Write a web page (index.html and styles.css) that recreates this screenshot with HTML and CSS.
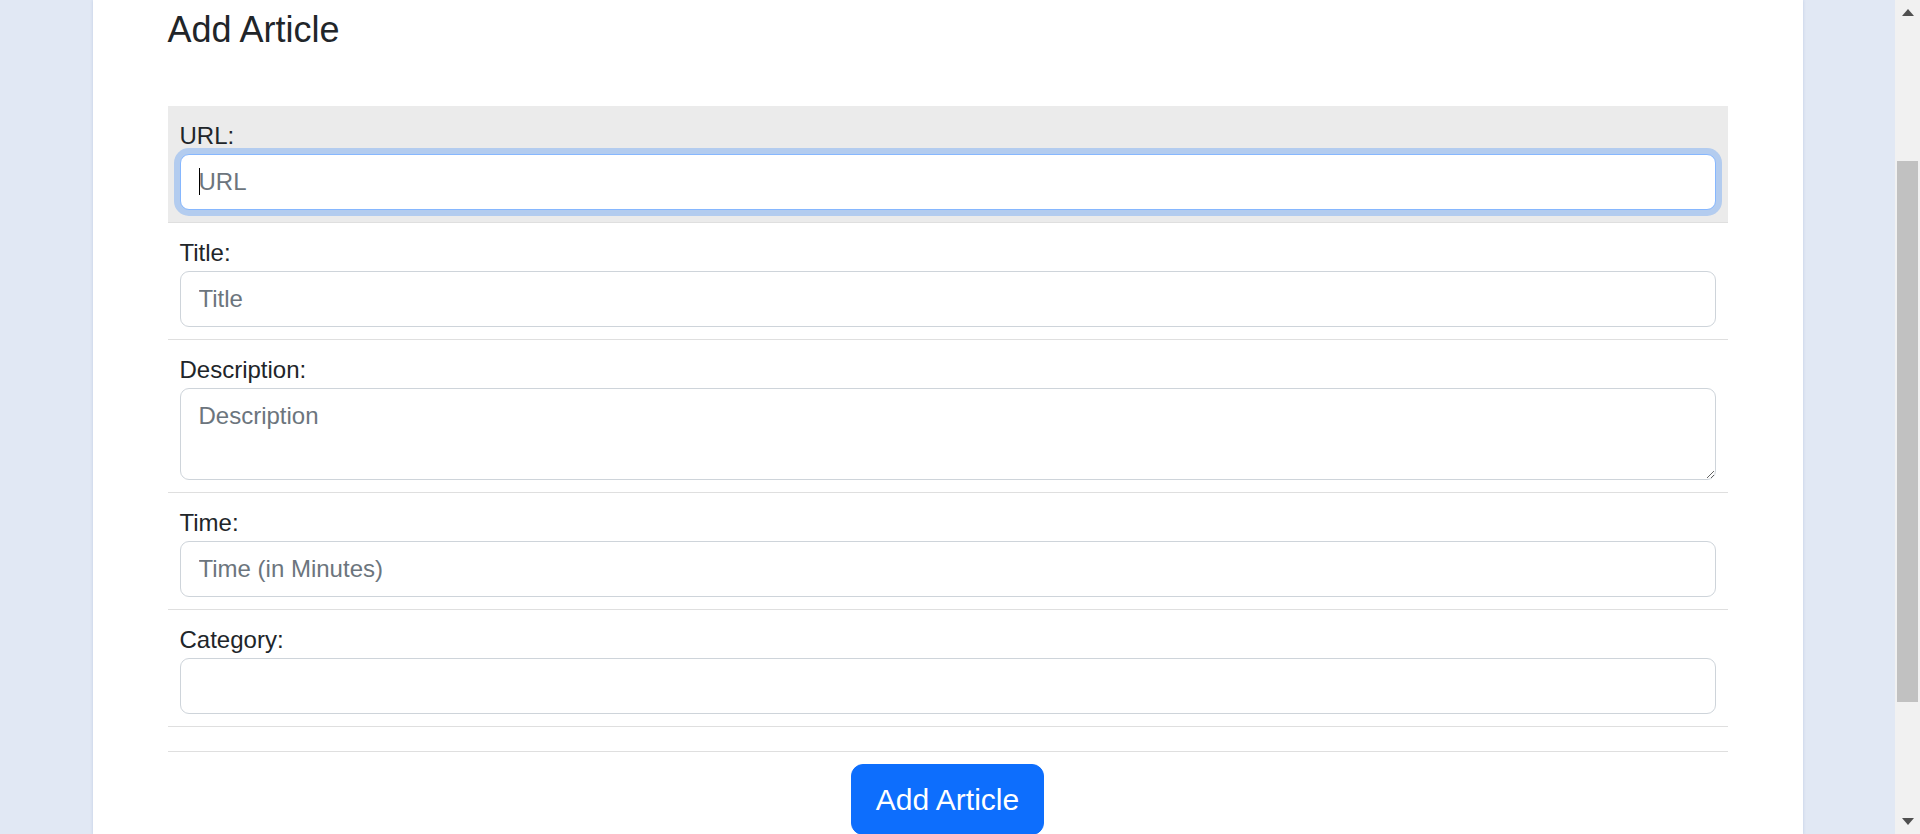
FILE: index.html
```html
<!DOCTYPE html>
<html lang="en">
<head>
<meta charset="utf-8">
<title>Add Article</title>
<link rel="stylesheet" href="styles.css">
</head>
<body>
<div class="viewport">
  <div class="page">
    <main class="card">
      <div class="container">
        <h4 class="heading">Add Article</h4>
        <form class="article-form">
          <ul class="list-group">
            <li class="list-item active-row">
              <label class="form-label" for="url">URL:</label>
              <div class="caret-wrap">
                <input class="form-control focused" id="url" type="text" placeholder="URL">
              </div>
            </li>
            <li class="list-item">
              <label class="form-label" for="title">Title:</label>
              <input class="form-control" id="title" type="text" placeholder="Title">
            </li>
            <li class="list-item">
              <label class="form-label" for="desc">Description:</label>
              <textarea class="form-control textarea" id="desc" rows="2" placeholder="Description"></textarea>
            </li>
            <li class="list-item">
              <label class="form-label" for="time">Time:</label>
              <input class="form-control" id="time" type="text" placeholder="Time (in Minutes)">
            </li>
            <li class="list-item">
              <label class="form-label" for="category">Category:</label>
              <input class="form-control" id="category" type="text">
            </li>
            <li class="list-item empty"></li>
          </ul>
          <div class="actions">
            <button class="btn" type="button">Add Article</button>
          </div>
        </form>
      </div>
    </main>
  </div>
  <div class="scrollbar" aria-hidden="true">
    <div class="sb-button">
      <svg width="12" height="7" viewBox="0 0 12 7"><polygon points="6,0 12,7 0,7" fill="#505050"/></svg>
    </div>
    <div class="sb-track">
      <div class="sb-thumb"></div>
    </div>
    <div class="sb-button">
      <svg width="12" height="7" viewBox="0 0 12 7"><polygon points="0,0 12,0 6,7" fill="#505050"/></svg>
    </div>
  </div>
</div>
</body>
</html>
```

FILE: styles.css
```css
body {
  margin: 0;
  background: #e1e8f4;
  font-family: "Liberation Sans", Arial, sans-serif;
  color: #212529;
}

.viewport {
  display: flex;
  height: 834px;
  overflow: hidden;
}

.page {
  flex: 1;
  min-width: 0;
}

.card {
  width: 1710px;
  min-height: 100%;
  margin: 0 auto;
  background: #ffffff;
  box-shadow: 0 0 3px rgba(40, 80, 160, 0.18);
  box-sizing: border-box;
  padding-top: 8px;
}

.container {
  padding: 0 75px;
}

.heading {
  margin: 0 0 55px;
  font-size: 36px;
  font-weight: 500;
  line-height: 1.2;
  color: #212529;
}

.article-form {
  margin: 0;
}

.list-group {
  list-style: none;
  margin: 0;
  padding: 0;
}

.list-item {
  padding: 12px;
  border-bottom: 1px solid #dfdfdf;
}

.active-row {
  background: #ebebeb;
}

.form-label {
  display: block;
  font-size: 24px;
  line-height: 36px;
  color: #212529;
}

.form-control {
  display: block;
  width: 100%;
  box-sizing: border-box;
  height: 56px;
  margin: 0;
  padding: 9px 18px;
  font-family: "Liberation Sans", Arial, sans-serif;
  font-size: 24px;
  line-height: 36px;
  color: #212529;
  background: #ffffff;
  border: 1px solid #ced4da;
  border-radius: 9px;
  outline: none;
}

.form-control::placeholder {
  color: #6c757d;
  opacity: 1;
}

.textarea {
  height: 92px;
  resize: vertical;
}

.form-control.focused {
  border-color: #86b7fe;
  box-shadow: 0 0 0 6px rgba(13, 110, 253, 0.25);
}

.caret-wrap {
  position: relative;
}

.caret-wrap::after {
  content: "";
  position: absolute;
  left: 19px;
  top: 14px;
  width: 1px;
  height: 27px;
  background: #000000;
}

.actions {
  display: flex;
  justify-content: center;
  margin-top: 12px;
}

.btn {
  font-family: "Liberation Sans", Arial, sans-serif;
  font-size: 30px;
  line-height: 45px;
  padding: 12px 24px;
  color: #ffffff;
  background: #0d6efd;
  border: 1px solid #0d6efd;
  border-radius: 12px;
  cursor: pointer;
}

.scrollbar {
  width: 25px;
  flex: none;
  display: flex;
  flex-direction: column;
  background: #f1f1f1;
}

.sb-button {
  height: 25px;
  flex: none;
  display: flex;
  align-items: center;
  justify-content: center;
}

.sb-track {
  flex: 1;
  padding: 136px 2px 0;
}

.sb-thumb {
  height: 541px;
  background: #c1c1c1;
}
```
